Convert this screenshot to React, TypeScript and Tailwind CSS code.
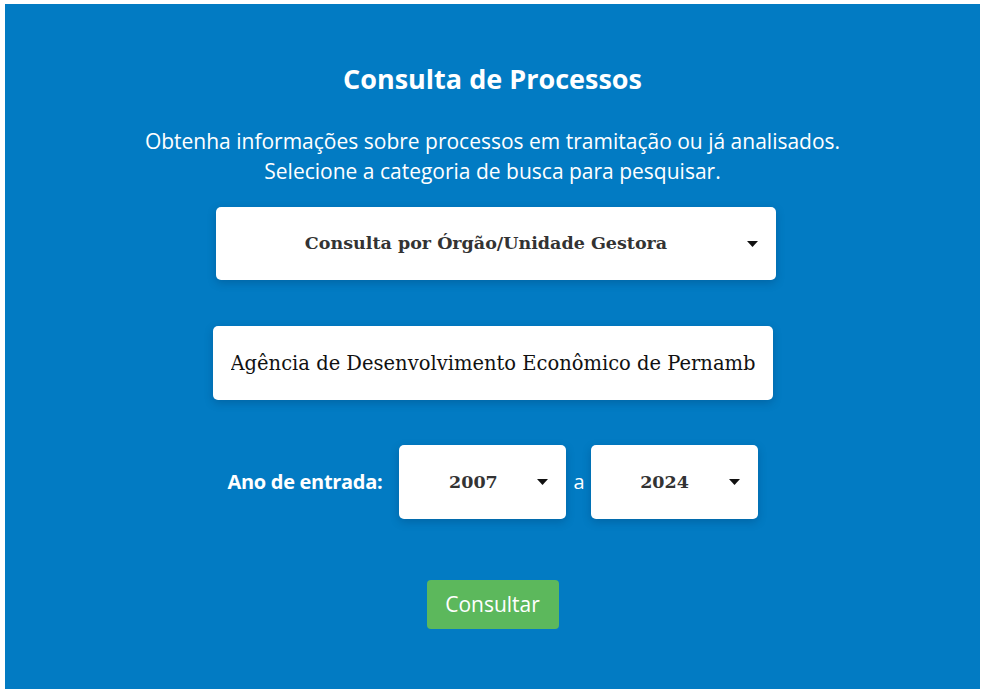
import { useState } from "react";

function Caret() {
  return (
    <svg width="11" height="6" viewBox="0 0 11 6" className="shrink-0">
      <path d="M0 0h11L5.5 6z" fill="#111" />
    </svg>
  );
}

function FakeSelect({ value, className }: { value: string; className: string }) {
  return (
    <div
      className={`flex items-center bg-white rounded-[5px] shadow-[0_3px_8px_rgba(0,40,80,0.25)] pl-4 pr-[18px] ${className}`}
    >
      <span className="flex-1 text-center mr-[6px] font-['DejaVu_Serif',serif] font-bold text-[#333] whitespace-nowrap">
        {value}
      </span>
      <Caret />
    </div>
  );
}

export default function App() {
  const [orgao, setOrgao] = useState(
    "Agência de Desenvolvimento Econômico de Pernambuco"
  );

  return (
    <div className="min-h-[697px] bg-white pt-1 pl-[5px] pr-[7px] pb-2 font-['Open_Sans',sans-serif]">
      <div className="bg-[#027bc3] h-[685px] flex flex-col items-center pt-[57px]">
        <h1 className="text-white font-bold text-[27px] leading-[36px]">Consulta de Processos</h1>
        <p className="mt-[29px] text-white text-[21px] leading-[30px] text-center">
          Obtenha informações sobre processos em tramitação ou já analisados.
          <br />
          Selecione a categoria de busca para pesquisar.
        </p>

        <FakeSelect
          value="Consulta por Órgão/Unidade Gestora"
          className="mt-[21px] w-[560px] h-[73px] ml-[6px] text-[17.5px]"
        />

        <input
          value={orgao}
          onChange={(e) => setOrgao(e.target.value)}
          className="mt-[46px] w-[560px] h-[74px] bg-white rounded-[5px] shadow-[0_3px_8px_rgba(0,40,80,0.25)] px-[18px] font-['DejaVu_Serif',serif] text-[19.5px] text-[#111] outline-none"
        />

        <div className="mt-[45px] flex items-center">
          <span className="text-white font-bold text-[20px] tracking-[-0.3px] mr-[17px]">Ano de entrada:</span>
          <FakeSelect value="2007" className="w-[167px] h-[74px] text-[17.5px]" />
          <span className="text-white text-[20px] ml-[7px] mr-[6px]">a</span>
          <FakeSelect value="2024" className="w-[167px] h-[74px] text-[17.5px]" />
        </div>

        <button className="mt-[61px] w-[132px] h-[49px] bg-[#5cb85c] rounded-[4px] text-white text-[21px]">
          Consultar
        </button>
      </div>
    </div>
  );
}
